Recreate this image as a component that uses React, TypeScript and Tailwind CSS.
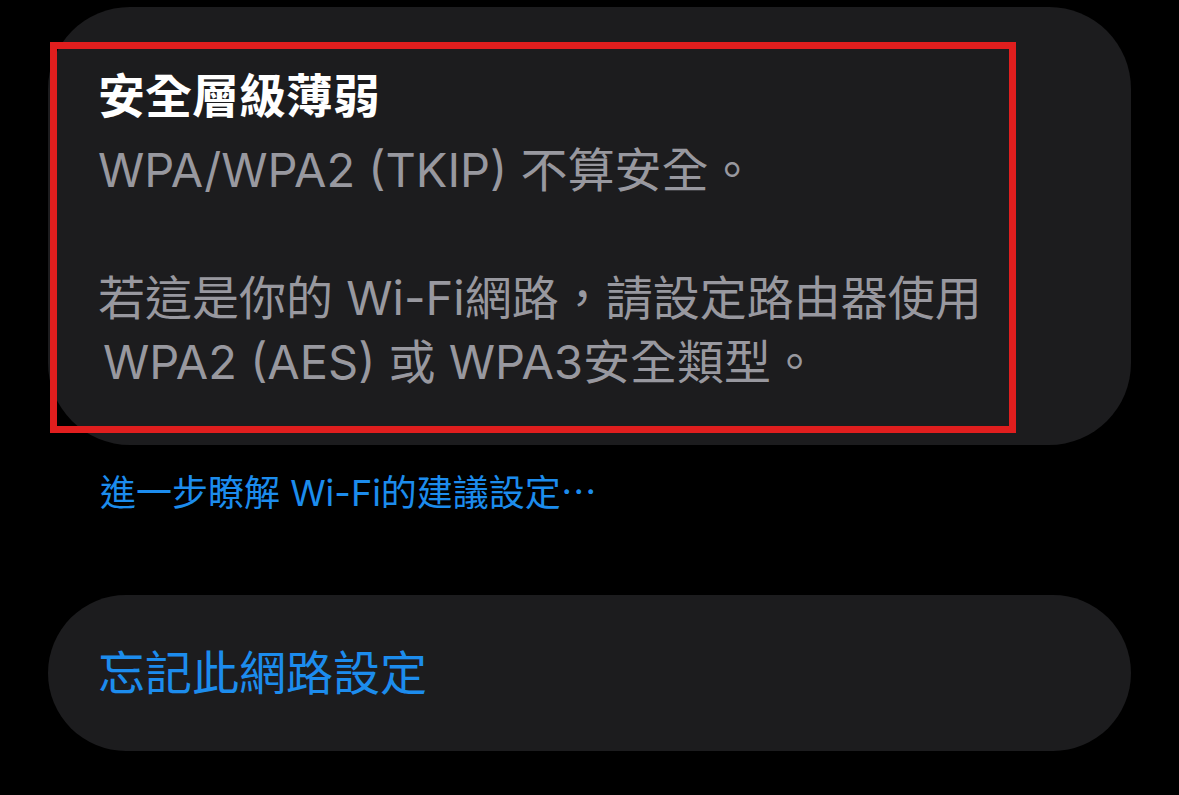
export default function App() {
  const font = { fontFamily: '"Inter", "Noto Sans CJK TC", sans-serif' }

  return (
    <div
      className="w-[1179px] h-[795px] overflow-hidden bg-black px-[48px] pt-[7px]"
      style={font}
    >
      {/* Security card */}
      <div className="relative h-[438px] rounded-[82px] bg-[#1c1c1e] pl-[50px] pt-[57px]">
        <div className="text-[47px] leading-[64px] font-semibold text-white">
          安全層級薄弱
        </div>
        <div className="mt-[10px] text-[47px] leading-[64px] text-[#98989f]">
          <div>WPA/WPA2 (TKIP) 不算安全。</div>
          <div className="h-[64px]" />
          <div>若這是你的 Wi-Fi網路，請設定路由器使用</div>
          <div className="pl-[5px]">WPA2 (AES) 或 WPA3安全類型。</div>
        </div>

        {/* annotation frame */}
        <div className="absolute left-[2px] top-[35px] w-[966px] h-[391px] border-[7px] border-[#e01e1e]" />
      </div>

      {/* Learn more link */}
      <div className="pl-[52px] mt-[26px] text-[36px] leading-[44px] text-[#1c8ced]">
        進一步瞭解 Wi-Fi的建議設定⋯
      </div>

      {/* Forget network */}
      <div className="mt-[80px] h-[156px] rounded-full bg-[#1c1c1e] pl-[50px] flex items-center">
        <span className="text-[47px] leading-[64px] text-[#1c8ced]">忘記此網路設定</span>
      </div>
    </div>
  )
}
